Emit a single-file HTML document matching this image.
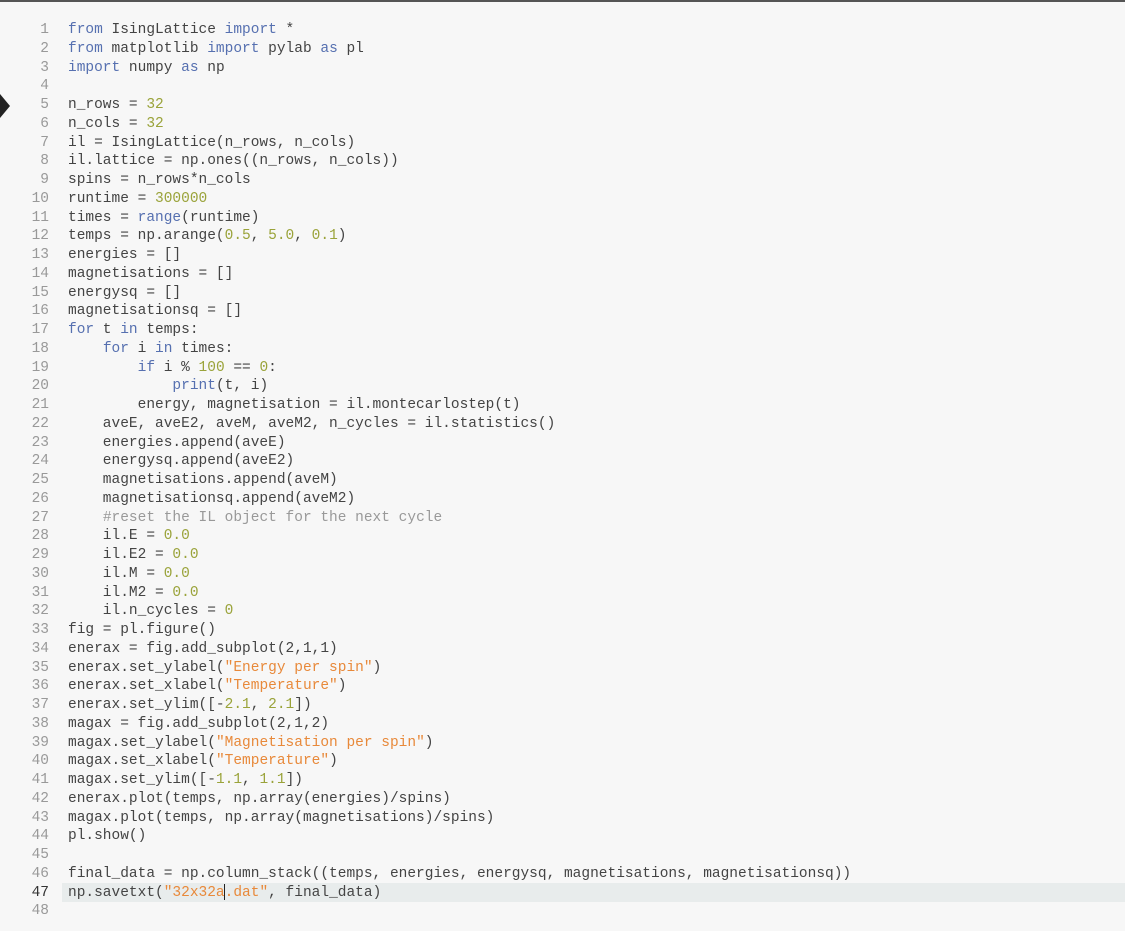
<!DOCTYPE html>
<html><head><meta charset="utf-8"><style>
html,body{margin:0;padding:0;}
body{width:1125px;height:931px;background:#f7f7f7;position:relative;overflow:hidden;font-family:"Liberation Mono",monospace;font-size:14.5px;color:#444;}
.top{position:absolute;left:0;top:0;width:1125px;height:2px;background:#555;}
.arrow{position:absolute;left:0;top:94px;width:0;height:0;border-top:12px solid transparent;border-bottom:12px solid transparent;border-left:10px solid #222;}
.hl{position:absolute;left:62px;right:0;top:883px;height:19px;background:#e8ecec;}
.code{position:absolute;left:0;top:21px;}
.l{height:18.76px;line-height:18.76px;white-space:pre;position:relative;}
.n{display:inline-block;width:49px;text-align:right;color:#999;margin-right:19px;}
.k{color:#5670b0}.m{color:#9aa33a}.s{color:#e8893a}.c{color:#999}
.cur{display:inline-block;width:1px;height:16px;background:#222;vertical-align:middle;margin:0 -0.5px;}
.b{color:#333}
</style></head><body>
<div class="top"></div>
<div class="arrow"></div>
<div class="hl"></div>
<div class="code">
<div class="l"><span class="n">1</span><span class="k">from</span> IsingLattice <span class="k">import</span> *</div>
<div class="l"><span class="n">2</span><span class="k">from</span> matplotlib <span class="k">import</span> pylab <span class="k">as</span> pl</div>
<div class="l"><span class="n">3</span><span class="k">import</span> numpy <span class="k">as</span> np</div>
<div class="l"><span class="n">4</span></div>
<div class="l"><span class="n">5</span>n_rows = <span class="m">32</span></div>
<div class="l"><span class="n">6</span>n_cols = <span class="m">32</span></div>
<div class="l"><span class="n">7</span>il = IsingLattice(n_rows, n_cols)</div>
<div class="l"><span class="n">8</span>il.lattice = np.ones((n_rows, n_cols))</div>
<div class="l"><span class="n">9</span>spins = n_rows*n_cols</div>
<div class="l"><span class="n">10</span>runtime = <span class="m">300000</span></div>
<div class="l"><span class="n">11</span>times = <span class="k">range</span>(runtime)</div>
<div class="l"><span class="n">12</span>temps = np.arange(<span class="m">0.5</span>, <span class="m">5.0</span>, <span class="m">0.1</span>)</div>
<div class="l"><span class="n">13</span>energies = []</div>
<div class="l"><span class="n">14</span>magnetisations = []</div>
<div class="l"><span class="n">15</span>energysq = []</div>
<div class="l"><span class="n">16</span>magnetisationsq = []</div>
<div class="l"><span class="n">17</span><span class="k">for</span> t <span class="k">in</span> temps:</div>
<div class="l"><span class="n">18</span>    <span class="k">for</span> i <span class="k">in</span> times:</div>
<div class="l"><span class="n">19</span>        <span class="k">if</span> i % <span class="m">100</span> == <span class="m">0</span>:</div>
<div class="l"><span class="n">20</span>            <span class="k">print</span>(t, i)</div>
<div class="l"><span class="n">21</span>        energy, magnetisation = il.montecarlostep(t)</div>
<div class="l"><span class="n">22</span>    aveE, aveE2, aveM, aveM2, n_cycles = il.statistics()</div>
<div class="l"><span class="n">23</span>    energies.append(aveE)</div>
<div class="l"><span class="n">24</span>    energysq.append(aveE2)</div>
<div class="l"><span class="n">25</span>    magnetisations.append(aveM)</div>
<div class="l"><span class="n">26</span>    magnetisationsq.append(aveM2)</div>
<div class="l"><span class="n">27</span>    <span class="c">#reset the IL object for the next cycle</span></div>
<div class="l"><span class="n">28</span>    il.E = <span class="m">0.0</span></div>
<div class="l"><span class="n">29</span>    il.E2 = <span class="m">0.0</span></div>
<div class="l"><span class="n">30</span>    il.M = <span class="m">0.0</span></div>
<div class="l"><span class="n">31</span>    il.M2 = <span class="m">0.0</span></div>
<div class="l"><span class="n">32</span>    il.n_cycles = <span class="m">0</span></div>
<div class="l"><span class="n">33</span>fig = pl.figure()</div>
<div class="l"><span class="n">34</span>enerax = fig.add_subplot(2,1,1)</div>
<div class="l"><span class="n">35</span>enerax.set_ylabel(<span class="s">"Energy per spin"</span>)</div>
<div class="l"><span class="n">36</span>enerax.set_xlabel(<span class="s">"Temperature"</span>)</div>
<div class="l"><span class="n">37</span>enerax.set_ylim([-<span class="m">2.1</span>, <span class="m">2.1</span>])</div>
<div class="l"><span class="n">38</span>magax = fig.add_subplot(2,1,2)</div>
<div class="l"><span class="n">39</span>magax.set_ylabel(<span class="s">"Magnetisation per spin"</span>)</div>
<div class="l"><span class="n">40</span>magax.set_xlabel(<span class="s">"Temperature"</span>)</div>
<div class="l"><span class="n">41</span>magax.set_ylim([-<span class="m">1.1</span>, <span class="m">1.1</span>])</div>
<div class="l"><span class="n">42</span>enerax.plot(temps, np.array(energies)/spins)</div>
<div class="l"><span class="n">43</span>magax.plot(temps, np.array(magnetisations)/spins)</div>
<div class="l"><span class="n">44</span>pl.show()</div>
<div class="l"><span class="n">45</span></div>
<div class="l"><span class="n">46</span>final_data = np.column_stack((temps, energies, energysq, magnetisations, magnetisationsq))</div>
<div class="l"><span class="n b">47</span>np.savetxt(<span class="s">"32x32a<span class="cur"></span>.dat"</span>, final_data)</div>
<div class="l"><span class="n">48</span></div>
</div>
</body></html>
